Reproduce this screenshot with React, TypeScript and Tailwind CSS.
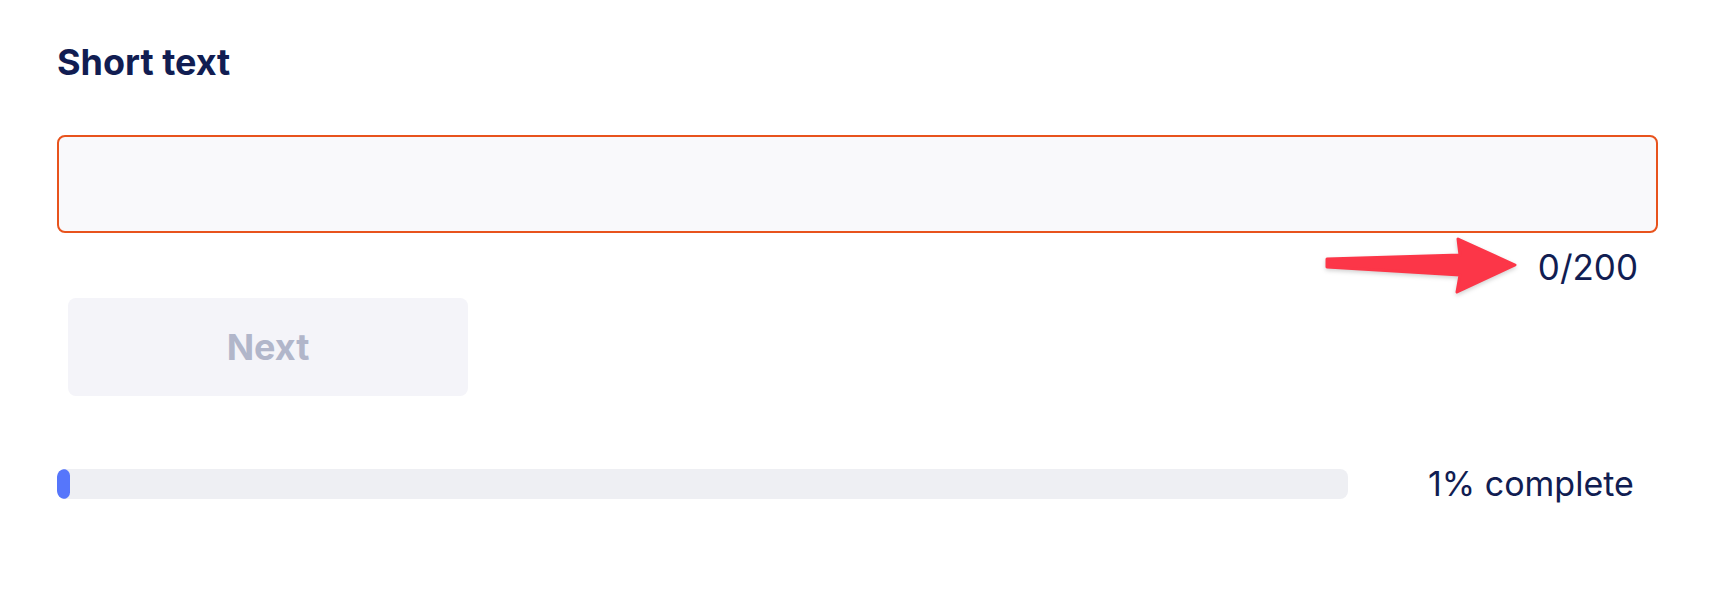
const navy = 'text-[#111d52]';

function Arrow() {
  return (
    <svg
      className="absolute left-[1320px] top-[230px] drop-shadow-[0_2px_2px_rgba(0,0,0,0.18)]"
      width="205"
      height="70"
      viewBox="0 0 205 70"
    >
      <path
        d="M7 29 L140 25 L138 9 L195 35 L137 62 L140 45 L7 37 Z"
        fill="#fc3648"
        stroke="#fc3648"
        strokeWidth="3"
        strokeLinejoin="round"
      />
    </svg>
  );
}

export default function App() {
  return (
    <div
      className="relative w-[1716px] h-[596px] bg-white overflow-hidden"
      style={{ fontFamily: 'Inter, "Noto Sans", sans-serif' }}
    >
      <div className="h-full pl-[57px] pt-[42px]">
        {/* Question */}
        <h2 className={`text-[36px] leading-[40px] font-bold ${navy}`}>Short text</h2>

        <input
          type="text"
          className="mt-[53px] block w-[1601px] h-[98px] rounded-[8px] border-2 border-[#e8531d] bg-[#f9f9fb] px-5 outline-none"
        />

        <div className="w-[1601px] flex justify-end pr-[20px] mt-[14px]">
          <span className={`text-[35px] leading-[40px] ${navy}`}>0/200</span>
        </div>

        <button
          disabled
          className="block mt-[11px] ml-[11px] w-[400px] h-[98px] rounded-[8px] bg-[#f4f4f9] text-[36px] font-bold text-[#b1b6ca]"
        >
          Next
        </button>

        {/* Progress */}
        <div className="mt-[68px] flex items-center">
          <div className="w-[1291px] h-[30px] rounded-[8px] bg-[#eeeff3] overflow-hidden">
            <div className="w-[13px] h-full rounded-full bg-[#5676fb]" />
          </div>
          <span className={`ml-[80px] text-[34px] leading-[40px] ${navy}`}>1% complete</span>
        </div>
      </div>

      <Arrow />
    </div>
  );
}
